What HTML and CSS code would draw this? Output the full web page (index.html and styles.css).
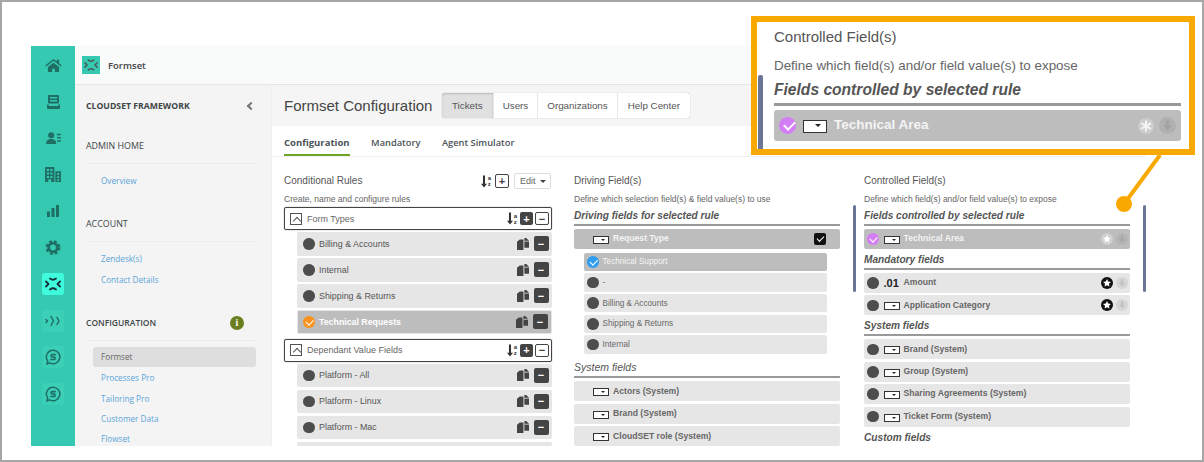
FILE: index.html
```html
<!DOCTYPE html>
<html lang="en">
<head>
  <meta charset="UTF-8" />
  <title>Formset Configuration</title>
  <link rel="stylesheet" href="styles.css">
</head>
<body>
  <svg class="defs" width="0" height="0">
    <symbol id="i-home" viewBox="0 0 18 14"><path d="M9 0 0 7l1 1.100L9 2l8 6.100L18 7l-3-2.300V.8h-2.500v2zM3 8.500V14h4.500v-3.500h3V14H15V8.500L9 4z"/></symbol>
    <symbol id="i-inbox" viewBox="0 0 13 14"><path d="M2 0h9a1 1 0 0 1 1 1v6.500a1 1 0 0 1-1 1H2a1 1 0 0 1-1-1V1a1 1 0 0 1 1-1zm1 2v1.500h7V2zm0 3v1.500h7V5zM0 9.500h1.800V11h9.400V9.500H13V13a1 1 0 0 1-1 1H1a1 1 0 0 1-1-1z"/></symbol>
    <symbol id="i-contact" viewBox="0 0 16 13"><circle cx="5.500" cy="3.500" r="3.300"/><path d="M0 13c0-4 2-5.500 5.500-5.500S11 9 11 13zM11.500 2H16v1.500h-4.500zM12 5.500h4V7h-4zM12 9h4v1.500h-4z"/></symbol>
    <symbol id="i-building" viewBox="0 0 17 16"><path d="M0 0h10v16H6.500v-3h-3v3H0zm2 2v2.300h2.300V2zm3.700 0v2.300H8V2zM2 5.800v2.300h2.300V5.800zm3.700 0v2.300H8V5.800zM2 9.500v2.300h2.300V9.500zm3.700 0v2.300H8V9.500zM11 4.500h6V16h-6zm2 2v2h2v-2zm0 3.300v2h2v-2zm0 3.200v2h2v-2z"/></symbol>
    <symbol id="i-bars" viewBox="0 0 12 12"><path d="M0 6.500h3V12H0zM4.500 3h3v9h-3zM9 0h3v12H9z"/></symbol>
    <symbol id="i-gear" viewBox="0 0 14 14"><circle cx="7" cy="7" r="4" fill="none" stroke="currentColor" stroke-width="2.600"/><circle cx="7" cy="7" r="5.800" fill="none" stroke="currentColor" stroke-width="2.200" stroke-dasharray="2.600 2"/></symbol>
    <symbol id="i-formset" viewBox="0 0 16 16"><path d="M1 5.500 3.500 8 1 10.500M15 5.500 12.500 8l2.500 2.500M5 2.500c2 1.600 4 1.600 6 0M5 13.500c2-1.600 4-1.600 6 0" fill="none" stroke="currentColor" stroke-width="1.800" stroke-linecap="round" stroke-linejoin="round"/></symbol>
    <symbol id="i-signal" viewBox="0 0 16 12"><path d="M1 4.500 2.500 6 1 7.500M6 1.500 8.500 6 6 10.500M12 2.500 14 6l-2 3.500" fill="none" stroke="currentColor" stroke-width="1.500" stroke-linecap="round" stroke-linejoin="round"/></symbol>
    <symbol id="i-s" viewBox="0 0 16 16"><path d="M8 1.200a6.800 6.800 0 1 1-3.500 12.600L2 15l.7-3A6.800 6.800 0 0 1 8 1.200z" fill="none" stroke="currentColor" stroke-width="1.500"/><path d="M10.800 5.600H7a1.300 1.300 0 0 0 0 2.400h2.200a1.300 1.300 0 0 1 0 2.500H5.200" fill="none" stroke="currentColor" stroke-width="1.700"/></symbol>
    <symbol id="i-copy" viewBox="0 0 13 13"><path d="M0 4 3 1.500h4V13H0zM8 0h2l3 3v7.500H8z"/><path d="M8 3.500h5" stroke="#e6e6e6" stroke-width=".8"/></symbol>
    <symbol id="i-arrow" viewBox="0 0 7 14"><path d="M2.300 0h2.400v9.500H7L3.500 14 0 9.500h2.300z"/></symbol>
    <symbol id="i-star" viewBox="0 0 12 12"><circle cx="6" cy="6" r="6"/><path d="m6 2 1.200 2.600 2.800.3-2.100 1.900.6 2.800L6 8.200 3.500 9.600l.6-2.800L2 4.900l2.800-.3z" fill="#fff"/></symbol>
    <symbol id="i-down" viewBox="0 0 12 12"><path d="M4.800 2.500h2.400v3.300H9L6 9.500 3 5.800h1.800z"/></symbol>
  </svg>

  <div class="app">
    <nav class="rail">
      <div class="rail-item"><svg class="rail-icon home"><use href="#i-home"/></svg></div>
      <div class="rail-item"><svg class="rail-icon inbox"><use href="#i-inbox"/></svg></div>
      <div class="rail-item"><svg class="rail-icon wide"><use href="#i-contact"/></svg></div>
      <div class="rail-item"><svg class="rail-icon"><use href="#i-building"/></svg></div>
      <div class="rail-item"><svg class="rail-icon small"><use href="#i-bars"/></svg></div>
      <div class="rail-item"><svg class="rail-icon"><use href="#i-gear"/></svg></div>
      <div class="rail-item"><span class="app-tile active"><svg class="tile-icon"><use href="#i-formset"/></svg></span></div>
      <div class="rail-item"><span class="app-tile"><svg class="tile-icon"><use href="#i-signal"/></svg></span></div>
      <div class="rail-item"><span class="app-tile"><svg class="tile-icon"><use href="#i-s"/></svg></span></div>
      <div class="rail-item"><span class="app-tile"><svg class="tile-icon"><use href="#i-s"/></svg></span></div>
    </nav>

    <div class="content">
      <header class="topbar">
        <span class="logo"><svg class="logo-icon"><use href="#i-formset"/></svg></span>
        <span class="topbar-title">Formset</span>
      </header>

      <div class="content-body">
        <aside class="sidebar">
          <div class="side-brand"><span>CLOUDSET FRAMEWORK</span><span class="collapse"></span></div>
          <div class="side-title">ADMIN HOME</div>
          <a class="side-link first">Overview</a>
          <div class="side-title">ACCOUNT</div>
          <a class="side-link first">Zendesk(s)</a>
          <a class="side-link">Contact Details</a>
          <div class="side-title config">CONFIGURATION<span class="info">i</span></div>
          <a class="side-current">Formset</a>
          <a class="side-link">Processes Pro</a>
          <a class="side-link">Tailoring Pro</a>
          <a class="side-link">Customer Data</a>
          <a class="side-link">Flowset</a>
        </aside>

        <main class="main">
          <div class="page-head">
            <h1>Formset Configuration</h1>
            <div class="btn-group">
              <button class="btn on">Tickets</button>
              <button class="btn">Users</button>
              <button class="btn">Organizations</button>
              <button class="btn">Help Center</button>
            </div>
          </div>

          <div class="subtabs">
            <a class="subtab on">Configuration</a>
            <a class="subtab">Mandatory</a>
            <a class="subtab">Agent Simulator</a>
          </div>

          <div class="columns">
            <section class="col col-rules">
              <div class="col-title-row">
                <h2 class="col-title">Conditional Rules</h2>
                <span class="sort"><svg class="sort-arrow"><use href="#i-arrow"/></svg><i>a<br>z</i></span>
                <span class="sq-btn outline big">+</span>
                <span class="edit-btn">Edit<span class="caret"></span></span>
              </div>
              <p class="col-sub">Create, name and configure rules</p>

              <div class="group">
                <span class="chev"></span><span class="group-name">Form Types</span>
                <span class="sort"><svg class="sort-arrow"><use href="#i-arrow"/></svg><i>a<br>z</i></span>
                <span class="sq-btn">+</span><span class="sq-btn outline">−</span>
              </div>
              <div class="rule"><span class="dot"></span><span class="rule-name">Billing &amp; Accounts</span><svg class="copy"><use href="#i-copy"/></svg><span class="sq-btn row-btn">−</span></div>
              <div class="rule"><span class="dot"></span><span class="rule-name">Internal</span><svg class="copy"><use href="#i-copy"/></svg><span class="sq-btn row-btn">−</span></div>
              <div class="rule"><span class="dot"></span><span class="rule-name">Shipping &amp; Returns</span><svg class="copy"><use href="#i-copy"/></svg><span class="sq-btn row-btn">−</span></div>
              <div class="rule selected"><span class="dot checked orange"></span><span class="rule-name">Technical Requests</span><svg class="copy"><use href="#i-copy"/></svg><span class="sq-btn row-btn">−</span></div>

              <div class="group">
                <span class="chev"></span><span class="group-name">Dependant Value Fields</span>
                <span class="sort"><svg class="sort-arrow"><use href="#i-arrow"/></svg><i>a<br>z</i></span>
                <span class="sq-btn">+</span><span class="sq-btn outline">−</span>
              </div>
              <div class="rule"><span class="dot"></span><span class="rule-name">Platform - All</span><svg class="copy"><use href="#i-copy"/></svg><span class="sq-btn row-btn">−</span></div>
              <div class="rule"><span class="dot"></span><span class="rule-name">Platform - Linux</span><svg class="copy"><use href="#i-copy"/></svg><span class="sq-btn row-btn">−</span></div>
              <div class="rule"><span class="dot"></span><span class="rule-name">Platform - Mac</span><svg class="copy"><use href="#i-copy"/></svg><span class="sq-btn row-btn">−</span></div>
              <div class="rule"></div>
            </section>

            <section class="col col-driving">
              <h2 class="col-title">Driving Field(s)</h2>
              <p class="col-sub">Define which selection field(s) &amp; field value(s) to use</p>
              <h3 class="col-heading">Driving fields for selected rule</h3>
              <div class="field selected"><span class="drop"></span><span class="field-name">Request Type</span><span class="check-box"></span></div>
              <div class="values">
                <div class="value selected"><span class="dot checked blue"></span>Technical Support</div>
                <div class="value"><span class="dot"></span>-</div>
                <div class="value"><span class="dot"></span>Billing &amp; Accounts</div>
                <div class="value"><span class="dot"></span>Shipping &amp; Returns</div>
                <div class="value"><span class="dot"></span>Internal</div>
              </div>
              <h3 class="col-heading light spaced">System fields</h3>
              <div class="field"><span class="drop"></span><span class="field-name">Actors (System)</span></div>
              <div class="field"><span class="drop"></span><span class="field-name">Brand (System)</span></div>
              <div class="field"><span class="drop"></span><span class="field-name">CloudSET role (System)</span></div>
            </section>

            <section class="col col-controlled">
              <span class="scroll-mark left"></span>
              <span class="scroll-mark right"></span>
              <h2 class="col-title">Controlled Field(s)</h2>
              <p class="col-sub">Define which field(s) and/or field value(s) to expose</p>
              <h3 class="col-heading">Fields controlled by selected rule</h3>
              <div class="field compact selected"><span class="dot checked purple"></span><span class="drop"></span><span class="field-name">Technical Area</span><svg class="star pale"><use href="#i-star"/></svg><svg class="down"><use href="#i-down"/></svg></div>
              <h3 class="col-heading">Mandatory fields</h3>
              <div class="field compact"><span class="dot"></span><span class="num">.01</span><span class="field-name">Amount</span><svg class="star"><use href="#i-star"/></svg><svg class="down"><use href="#i-down"/></svg></div>
              <div class="field compact"><span class="dot"></span><span class="drop"></span><span class="field-name">Application Category</span><svg class="star"><use href="#i-star"/></svg><svg class="down"><use href="#i-down"/></svg></div>
              <h3 class="col-heading">System fields</h3>
              <div class="field compact"><span class="dot"></span><span class="drop"></span><span class="field-name">Brand (System)</span></div>
              <div class="field compact"><span class="dot"></span><span class="drop"></span><span class="field-name">Group (System)</span></div>
              <div class="field compact"><span class="dot"></span><span class="drop"></span><span class="field-name">Sharing Agreements (System)</span></div>
              <div class="field compact"><span class="dot"></span><span class="drop"></span><span class="field-name">Ticket Form (System)</span></div>
              <h3 class="col-heading bare">Custom fields</h3>
            </section>
          </div>
        </main>
      </div>
    </div>
  </div>

  <!-- zoomed callout over the third column -->
  <svg class="connector" width="60" height="70" viewBox="0 0 60 70">
    <path d="M49 0 13 49" stroke="#f9a800" stroke-width="4" fill="none"/>
    <circle cx="13" cy="49" r="8" fill="#f9a800"/>
  </svg>
  <div class="callout">
    <span class="callout-mark"></span>
    <div class="callout-title">Controlled Field(s)</div>
    <div class="callout-sub">Define which field(s) and/or field value(s) to expose</div>
    <div class="callout-heading">Fields controlled by selected rule</div>
    <div class="callout-row">
      <span class="dot checked purple"></span><span class="drop"></span>
      <span class="callout-name">Technical Area</span>
      <svg class="callout-star" viewBox="0 0 16 16"><circle cx="8" cy="8" r="8" fill="#cdcdcd"/><path d="M8 2.500v11M3.200 5.200l9.600 5.600M12.800 5.200l-9.600 5.600" stroke="#f4f4f4" stroke-width="2"/></svg>
      <svg class="callout-down"><use href="#i-down"/></svg>
    </div>
  </div>
</body>
</html>
```

FILE: styles.css
```css
* {
  box-sizing: border-box;
}
html, body {
  margin: 0;
  padding: 0;
}
body {
  position: relative;
  width: 1204px;
  height: 462px;
  padding: 44px 0 0 29px;
  border: 2px solid #a6a6a6;
  background: #fff;
  font-family: "Liberation Sans", Arial, sans-serif;
  color: #555;
  overflow: hidden;
}
.defs {
  position: absolute;
}
h1, h2, h3, p {
  margin: 0;
  font-weight: normal;
}

.app {
  display: flex;
  width: 1115px;
  height: 400px;
  overflow: hidden;
}

/* left rail */
.rail {
  flex: 0 0 44px;
  padding-top: 1px;
  background: #35c9b1;
  color: #1f6f64;
}
.rail-item {
  display: flex;
  align-items: center;
  justify-content: center;
  height: 36.5px;
}
.rail-icon {
  width: 16px;
  height: 15px;
  fill: currentColor;
}
.rail-icon.home {
  width: 17px;
  height: 13px;
}
.rail-icon.inbox {
  width: 13px;
  height: 14px;
}
.rail-icon.wide {
  width: 15px;
  height: 12px;
}
.rail-icon.small {
  width: 12px;
  height: 12px;
}
.app-tile {
  display: flex;
  align-items: center;
  justify-content: center;
  width: 22px;
  height: 22px;
  border-radius: 3px;
  background: #3ccfb8;
}
.app-tile.active {
  background: #3ffadb;
  color: #17313a;
}
.tile-icon {
  width: 16px;
  height: 16px;
}

.content {
  flex: 1;
  min-width: 0;
}
.topbar {
  display: flex;
  align-items: center;
  height: 39px;
  padding-left: 7px;
  background: #f9fafa;
  border-bottom: 1px solid #e6e6e6;
}
.logo {
  display: flex;
  align-items: center;
  justify-content: center;
  width: 18px;
  height: 18px;
  background: #35c9b1;
  color: #4a5a5a;
}
.logo-icon {
  width: 14px;
  height: 14px;
}
.topbar-title {
  margin-left: 8px;
  font: 600 9.500px "Open Sans", sans-serif;
  color: #444;
}
.content-body {
  display: flex;
}

/* settings sidebar */
.sidebar {
  flex: 0 0 197px;
  height: 361px;
  padding: 0 15px 0 11px;
  background: #f4f4f4;
  border-right: 1px solid #eee;
  font-family: "Open Sans", sans-serif;
}
.side-brand {
  display: flex;
  justify-content: space-between;
  align-items: center;
  height: 14px;
  margin-top: 14px;
  padding-right: 2px;
  font-size: 8.700px;
  font-weight: 700;
  color: #3f4648;
}
.collapse {
  width: 6px;
  height: 6px;
  border-left: 2px solid #777;
  border-bottom: 2px solid #777;
  transform: rotate(45deg);
}
.side-title {
  display: flex;
  justify-content: space-between;
  align-items: flex-start;
  height: 25px;
  margin-top: 26px;
  border-bottom: 1px solid #ececec;
  font-size: 8.900px;
  line-height: 14px;
  color: #3f4648;
}
.side-title.config {
  font-size: 8.500px;
  font-weight: 600;
  padding-right: 12px;
}
.info {
  width: 14px;
  height: 14px;
  border-radius: 50%;
  background: #6b7f20;
  color: #fff;
  font: 700 10px/14px "Liberation Serif", serif;
  text-align: center;
}
.side-link {
  display: block;
  height: 20.400px;
  padding-left: 15px;
  font-size: 8.200px;
  line-height: 20.400px;
  color: #5ba4d9;
}
.side-link.first {
  margin-top: 7px;
}
.side-current {
  display: block;
  height: 20px;
  margin: 6px 0 1px 7px;
  padding-left: 8px;
  border-radius: 3px;
  background: #dedede;
  font-size: 8.200px;
  line-height: 20px;
  color: #666;
}

/* main area */
.main {
  flex: 1;
  min-width: 0;
}
.page-head {
  display: flex;
  align-items: center;
  height: 41px;
  padding-left: 12px;
  background: #f5f5f5;
}
.page-head h1 {
  width: 158px;
  font-size: 15px;
  color: #444;
}
.btn-group {
  display: flex;
  height: 25px;
  border-radius: 3px;
  background: #fff;
  box-shadow: 0 0 1px #999;
}
.btn {
  padding: 0 9px;
  border: 0;
  border-right: 1px solid #e6e6e6;
  background: none;
  font: 9.800px "Liberation Sans", sans-serif;
  color: #555;
}
.btn:last-child {
  padding: 0 9.500px 0 10px;
  border-right: 0;
}
.btn.on {
  padding: 0 10px;
  background: #e0e0e0;
  box-shadow: inset 0 1px 2px #bbb;
  border-radius: 3px 0 0 3px;
}
.subtabs {
  display: flex;
  gap: 21.500px;
  height: 31px;
  padding-left: 12px;
  border-bottom: 1px solid #f0f0f0;
  font: 600 9.300px/33px "Open Sans", sans-serif;
  color: #4b5258;
}
.subtab {
  height: 30px;
}
.subtab.on {
  border-bottom: 2px solid #6ea528;
  font-size: 9.500px;
  font-weight: 700;
}
.columns {
  display: flex;
  padding: 17px 0 0 12px;
}
.col {
  position: relative;
  flex: 0 0 266px;
}
.col-rules {
  flex-basis: 267px;
  margin-right: 22px;
}
.col-driving {
  margin-right: 24px;
}
.col-title {
  height: 14px;
  font-size: 10px;
  line-height: 14px;
  color: #555;
}
.col-title-row {
  display: flex;
  align-items: center;
  gap: 2px;
  height: 14px;
  padding-right: 1px;
}
.col-title-row .col-title {
  flex: 1;
}
.col-sub {
  height: 12px;
  margin: 5px 0 2px;
  font-size: 8.500px;
  line-height: 12px;
  color: #666;
}
.col-heading {
  height: 17px;
  margin-top: 4px;
  margin-bottom: 3px;
  border-bottom: 2px solid #999;
  font-size: 10.150px;
  font-weight: 700;
  font-style: italic;
  line-height: 13px;
  color: #555;
}
.col-heading.light {
  font-size: 10.500px;
  font-weight: normal;
}
.col-heading.spaced {
  margin-top: 7.500px;
}
.col-heading.bare {
  margin-top: 4px;
  border-bottom: 0;
}

/* conditional rules */
.sort {
  display: inline-flex;
  align-items: center;
  gap: 1px;
  height: 13px;
  margin-right: 1px;
  color: #333;
}
.sort-arrow {
  width: 6px;
  height: 13px;
  fill: #333;
}
.sort i {
  font: 700 6px/6px "Liberation Sans", sans-serif;
}
.sq-btn {
  display: inline-flex;
  align-items: center;
  justify-content: center;
  width: 13px;
  height: 13px;
  border-radius: 2px;
  background: #444;
  font-size: 11px;
  font-weight: 700;
  color: #fff;
}
.sq-btn.outline {
  width: 14px;
  border: 1px solid #444;
  background: #fff;
  color: #444;
}
.sq-btn.big {
  height: 14px;
  margin: 0 3px 0 1px;
}
.edit-btn {
  display: inline-flex;
  align-items: center;
  justify-content: space-between;
  width: 37px;
  height: 16px;
  padding: 0 4px 0 5px;
  border: 1px solid #ddd;
  border-radius: 2px;
  font-size: 9px;
  color: #666;
}
.caret {
  border: 3px solid transparent;
  border-top-color: #444;
  border-bottom: 0;
}
.group {
  display: flex;
  align-items: center;
  gap: 2px;
  width: 268px;
  height: 23px;
  margin-bottom: 2px;
  padding: 0 2px 0 5px;
  border: 1px solid #444;
  border-radius: 2px;
  box-shadow: 0 0 1px #444;
}
.rule + .group {
  margin-top: 5px;
}
.chev {
  position: relative;
  width: 12px;
  height: 12px;
  border: 1px solid #555;
}
.chev::after {
  content: "";
  position: absolute;
  left: 3px;
  top: 4px;
  width: 5px;
  height: 5px;
  border-left: 1px solid #555;
  border-top: 1px solid #555;
  transform: rotate(45deg);
}
.group-name {
  flex: 1;
  margin-left: 3px;
  font-size: 9px;
  color: #666;
}
.rule {
  display: flex;
  align-items: center;
  height: 23.500px;
  margin: 0 0 2.500px 13px;
  padding: 0 3.500px 0 6px;
  border-radius: 2px;
  background: #e6e6e6;
}
.rule.selected {
  background: #bdbdbd;
  border: 1px solid #e6e6e6;
  padding-left: 5px;
}
.rule-name {
  flex: 1;
  margin-left: 4.500px;
  font-size: 8.900px;
  color: #555;
}
.selected .rule-name {
  font-size: 8.800px;
  font-weight: 700;
  color: #fff;
}
.copy {
  width: 12px;
  height: 12px;
  margin-right: 5px;
  fill: #444;
}
.row-btn {
  width: 15px;
  height: 15px;
}
.dot {
  position: relative;
  flex: none;
  width: 11.500px;
  height: 11.500px;
  border-radius: 50%;
  background: #4d4d4d;
}
.dot.checked::after {
  content: "";
  position: absolute;
  left: 3px;
  top: 2.500px;
  width: 6px;
  height: 3.500px;
  border-left: 1.500px solid #fff;
  border-bottom: 1.500px solid #fff;
  transform: rotate(-45deg);
}
.dot.orange {
  background: #f7941d;
}
.dot.blue {
  background: #2f9ef0;
}
.dot.purple {
  background: #d47ef5;
}

/* field rows */
.field {
  display: flex;
  align-items: center;
  height: 20px;
  margin-bottom: 2.600px;
  padding: 0 14px 0 19px;
  border-radius: 2px;
  background: #e6e6e6;
}
.field.selected {
  background: #bdbdbd;
  margin-bottom: 0;
}
.field.compact {
  margin-bottom: 2.400px;
  padding: 0 2px 0 3px;
}
.field.compact.selected {
  margin-bottom: 0;
}
.drop {
  position: relative;
  flex: none;
  width: 16px;
  height: 8px;
  margin-top: 2px;
  border: 1px solid #333;
  border-bottom-width: 1.500px;
  background: #fff;
}
.drop::after {
  content: "";
  position: absolute;
  right: 3px;
  top: 2px;
  border: 2px solid transparent;
  border-top-color: #222;
  border-bottom: 0;
}
.compact .drop {
  margin-left: 5px;
}
.field-name {
  flex: 1;
  margin: 0 0 1.500px 4px;
  font-size: 8.650px;
  font-weight: 700;
  color: #666;
}
.selected .field-name {
  color: #f4f4f4;
}
.check-box {
  position: relative;
  width: 12px;
  height: 12px;
  border-radius: 2px;
  background: #111;
}
.check-box::after {
  content: "";
  position: absolute;
  left: 3px;
  top: 3px;
  width: 6px;
  height: 3px;
  border-left: 1.500px solid #fff;
  border-bottom: 1.500px solid #fff;
  transform: rotate(-45deg);
}
.values {
  margin: 3.500px 13px 0 10px;
}
.value {
  display: flex;
  align-items: center;
  gap: 4px;
  height: 18.500px;
  margin-bottom: 2.200px;
  padding-left: 3px;
  border-radius: 2px;
  background: #e6e6e6;
  font-size: 8.200px;
  color: #666;
}
.value.selected {
  background: #bdbdbd;
  color: #f4f4f4;
}
.num {
  margin-left: 5px;
  width: 16px;
  font-size: 11px;
  font-weight: 700;
  color: #222;
}
.star {
  width: 12px;
  height: 12px;
  margin-right: 3px;
  fill: #111;
}
.star.pale {
  fill: #d0d0d0;
}
.down {
  width: 12px;
  height: 12px;
  border-radius: 50%;
  background: #d6d6d6;
  fill: #c2c2c2;
}
.selected .down {
  background: #b4b4b4;
  fill: #a8a8a8;
}
.scroll-mark {
  position: absolute;
  top: 31px;
  width: 3px;
  height: 87px;
  border-radius: 2px;
  background: #6b7595;
}
.scroll-mark.left {
  left: -11px;
}
.scroll-mark.right {
  left: 279px;
}

/* callout */
.connector {
  position: absolute;
  left: 1109px;
  top: 153px;
}
.callout {
  position: absolute;
  left: 749px;
  top: 14px;
  width: 444px;
  height: 139px;
  padding: 6px 8px 0 17px;
  border: 6px solid #f9a800;
  background: #fff;
  overflow: hidden;
}
.callout-mark {
  position: absolute;
  left: 1px;
  top: 53px;
  width: 5px;
  height: 80px;
  background: #6b7595;
  border-radius: 2px 2px 0 0;
}
.callout-title {
  height: 18px;
  font-size: 15px;
  line-height: 18px;
  color: #555;
}
.callout-sub {
  height: 16px;
  margin-top: 12px;
  font-size: 13.400px;
  line-height: 16px;
  color: #666;
}
.callout-heading {
  height: 25px;
  margin-top: 7px;
  border-bottom: 3px solid #999;
  font-size: 15.600px;
  font-weight: 700;
  font-style: italic;
  line-height: 18px;
  color: #555;
}
.callout-row {
  display: flex;
  align-items: center;
  height: 31px;
  margin-top: 4px;
  padding: 0 5px;
  border-radius: 3px;
  background: #bdbdbd;
}
.callout-row .dot {
  width: 17px;
  height: 17px;
}
.callout-row .dot::after {
  left: 4.500px;
  top: 4px;
  width: 9px;
  height: 5px;
  border-width: 2px;
}
.callout-row .drop {
  width: 24px;
  height: 13px;
  margin-left: 7px;
  border-width: 1.500px;
}
.callout-row .drop::after {
  right: 5px;
  top: 3px;
  border-width: 3px;
  border-bottom: 0;
}
.callout-name {
  flex: 1;
  margin: 0 0 3px 7px;
  font-size: 13.500px;
  font-weight: 700;
  color: #f4f4f4;
}
.callout-star {
  width: 16px;
  height: 16px;
  margin-right: 5px;
}
.callout-down {
  width: 17px;
  height: 17px;
  border-radius: 50%;
  background: #b0b0b0;
  fill: #a2a2a2;
}
```
